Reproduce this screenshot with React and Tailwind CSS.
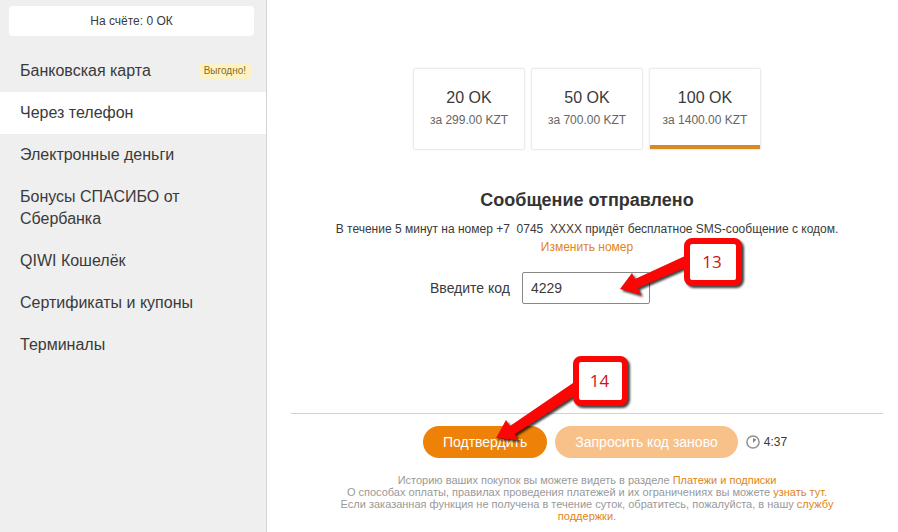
import { useState } from 'react';

const methods = [
  { label: 'Банковская карта', badge: 'Выгодно!' },
  { label: 'Через телефон', active: true },
  { label: 'Электронные деньги' },
  { label: 'Бонусы СПАСИБО от Сбербанка' },
  { label: 'QIWI Кошелёк' },
  { label: 'Сертификаты и купоны' },
  { label: 'Терминалы' },
];

const packs = [
  { amount: '20 OK', price: 'за 299.00 KZT' },
  { amount: '50 OK', price: 'за 700.00 KZT' },
  { amount: '100 OK', price: 'за 1400.00 KZT' },
];

function Sidebar() {
  return (
    <aside className="w-[267px] shrink-0 border-r border-[#d4d4d4] bg-[#efefef] pt-1.5">
      <div className="ml-[9px] mr-3 rounded-sm bg-white text-center text-xs leading-[30px]">
        На счёте: 0 ОК
      </div>
      <nav className="mt-3.5">
        {methods.map(({ label, badge, active }) => (
          <a
            key={label}
            href="#"
            className={[
              'flex items-center justify-between py-2.5 pl-5 pr-[15px] text-base leading-[22px]',
              active ? 'bg-white' : '',
            ].join(' ')}
          >
            <span className="max-w-[190px]">{label}</span>
            {badge && (
              <span className="rounded-sm bg-[#fdf2c5] px-[5px] text-[10px] leading-4 text-[#8a6d20]">
                {badge}
              </span>
            )}
          </a>
        ))}
      </nav>
    </aside>
  );
}

function Packs() {
  const [selected, setSelected] = useState(2);

  return (
    <div className="flex justify-center gap-1.5">
      {packs.map(({ amount, price }, i) => (
        <button
          key={amount}
          type="button"
          onClick={() => setSelected(i)}
          className="flex h-[82px] w-28 flex-col items-center justify-between rounded-xs border border-[#ebebeb] pt-[18px] shadow-[0_0_2px_rgba(0,0,0,0.08)]"
        >
          <span className="flex flex-col">
            <span className="text-base leading-[22px]">{amount}</span>
            <span className="text-xs leading-[22px] text-[#666]">{price}</span>
          </span>
          {i === selected && <span className="h-1 w-full bg-[#d98a22]" />}
        </button>
      ))}
    </div>
  );
}

// Numbered marker with an arrow that points at a control
function Callout({ number, arrow, x, y, width, height, className }) {
  return (
    <svg
      width="140"
      height="100"
      viewBox="0 0 140 100"
      className={`pointer-events-none absolute overflow-visible ${className}`}
    >
      <g className="drop-shadow-[2px_2px_1px_rgba(0,0,0,0.75)]">
        <path d={arrow} fill="#fb0505" />
        <rect x={x} y={y} width={width} height={height} rx="5" fill="#fff" stroke="#fb0505" strokeWidth="6" />
      </g>
      <text
        x={x + width / 2 - 1}
        y={y + height / 2 + 6}
        textAnchor="middle"
        className="font-['Open_Sans',sans-serif] text-[17px]"
        fill="#cc1420"
      >
        {number}
      </text>
    </svg>
  );
}

function ClockIcon() {
  return (
    <svg width="14" height="14" viewBox="0 0 14 14" fill="none">
      <circle cx="7" cy="7" r="6.1" stroke="#919191" strokeWidth="1.5" />
      <path d="M7 3.2 A4 4 0 0 1 10.3 4.8 L7 8 Z" fill="#858585" />
    </svg>
  );
}

export default function App() {
  const [code, setCode] = useState('4229');

  return (
    <div className="flex min-h-screen bg-white font-['Liberation_Sans',Arial,sans-serif] text-[#3a3a3a]">
      <Sidebar />

      <main className="flex-1 pl-6 pr-[15px] pt-[68px]">
        <Packs />

        <section className="mt-[38px] text-center text-xs leading-[18px]">
          <h1 className="text-lg font-bold leading-6 text-[#333]">Сообщение отправлено</h1>
          <p className="mt-2 whitespace-pre-wrap">
            В течение 5 минут на номер +7{'  '}0745{'  '}XXXX придёт бесплатное SMS-сообщение с кодом.
          </p>
          <a href="#" className="text-[#e08516]">Изменить номер</a>
        </section>

        <form>
          <div className="mt-4 flex items-center justify-center gap-3 pr-[94px] text-sm">
            <label htmlFor="code">Введите код</label>
            <div className="relative">
              <input
                id="code"
                value={code}
                onChange={(e) => setCode(e.target.value)}
                className="block h-8 w-32 rounded-xs border border-[#888] px-2"
              />
              <Callout
                number="13"
                arrow="M98 51 L110 35 L113 41 L163 18 L167 28 L116 50 L119 57 Z"
                x={165}
                y={3}
                width={52}
                height={42}
                className="-top-[34px] left-0"
              />
            </div>
          </div>

          <div className="mt-[109px] flex items-center justify-center gap-2 border-t border-[#d2d2d2] pl-9 pt-3">
            <div className="relative">
              <button type="button" className="h-8 rounded-full bg-[#ee8208] px-5 text-sm text-white">
                Подтвердить
              </button>
              <Callout
                number="14"
                arrow="M73 82 L83 64 L87 70 L150 27 L156 37 L92 78 L95 84 Z"
                x={153}
                y={3}
                width={49}
                height={44}
                className="-top-[70px] left-0"
              />
            </div>
            <button type="button" className="h-8 rounded-full bg-[#f7c189] px-5 text-sm text-white">
              Запросить код заново
            </button>
            <span className="flex items-center gap-1 text-xs">
              <ClockIcon />
              4:37
            </span>
          </div>
        </form>

        <footer className="mx-auto mt-4 max-w-[500px] text-center text-[11px] leading-3 text-[#999]">
          <p>
            Историю ваших покупок вы можете видеть в разделе{' '}
            <a href="#" className="text-[#e08516]">Платежи и подписки</a>
          </p>
          <p>
            О способах оплаты, правилах проведения платежей и их ограничениях вы можете{' '}
            <a href="#" className="text-[#e08516]">узнать тут</a>.
          </p>
          <p>
            Если заказанная функция не получена в течение суток, обратитесь, пожалуйста, в нашу{' '}
            <a href="#" className="text-[#e08516]">службу поддержки</a>.
          </p>
        </footer>
      </main>
    </div>
  );
}
